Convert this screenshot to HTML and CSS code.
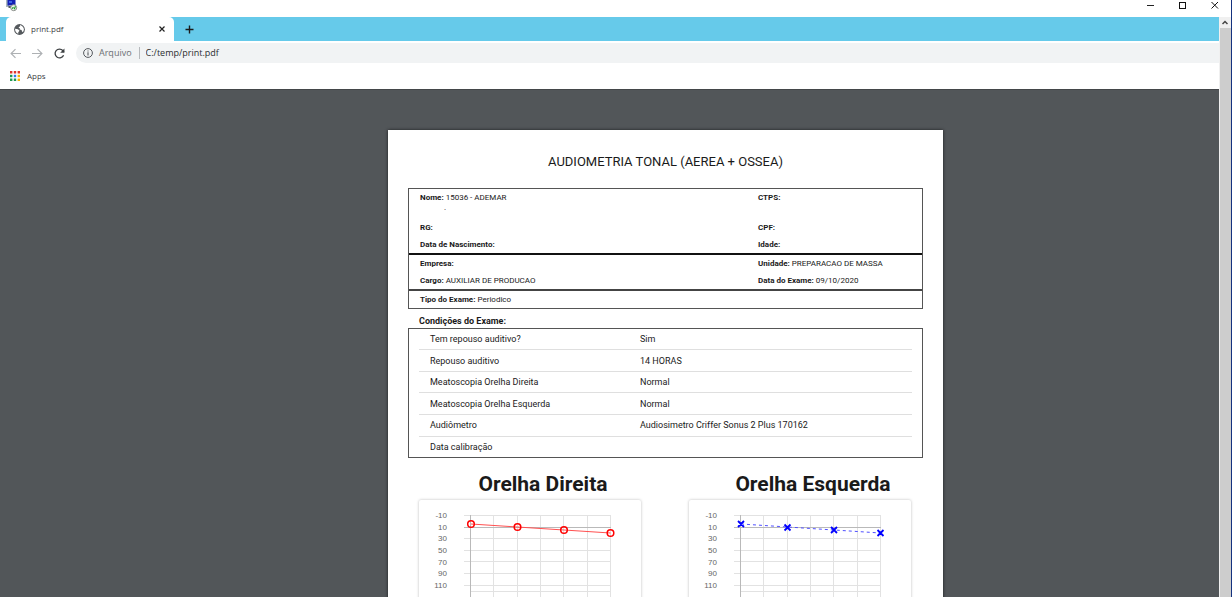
FILE: index.html
```html
<!DOCTYPE html>
<html lang="pt-BR">
<head>
<meta charset="utf-8">
<title>print.pdf</title>
<link rel="stylesheet" href="styles.css">
</head>
<body>
<div class="window">
  <header class="titlebar">
    <svg class="app-icon" viewBox="0 0 12 12" aria-hidden="true">
      <rect x="0" y="0" width="3" height="7" fill="#a9b6bd"/>
      <rect x="1.500" y="0" width="8" height="5.500" fill="#1420b4"/>
      <rect x="3" y="1" width="3" height="2" fill="#3c63e8"/>
      <rect x="2.500" y="6" width="4" height="2" fill="#555b60"/>
      <circle cx="7.700" cy="7.700" r="3" fill="#eef3ee" stroke="#8b8f8b"/>
      <path d="M6 8.600 7.500 7.200M9.500 6.300 8.200 9.300" stroke="#1d9a2b" stroke-width="1.200" fill="none"/>
    </svg>
    <div class="window-controls">
      <button type="button" aria-label="Minimizar"><svg viewBox="0 0 8 8"><path d="M0 4.500h7" stroke="#222"/></svg></button>
      <button type="button" aria-label="Maximizar"><svg viewBox="0 0 8 8"><rect x=".5" y="1.500" width="6" height="6" fill="none" stroke="#111"/></svg></button>
      <button type="button" aria-label="Fechar"><svg viewBox="0 0 8 8"><path d="M.5 1 7 7.500M7 1 .5 7.500" stroke="#111" fill="none"/></svg></button>
    </div>
  </header>
  <div class="client">
    <div class="browser">
      <nav class="tabstrip">
        <div class="tab">
          <svg class="globe" viewBox="0 0 10 10" aria-hidden="true">
            <circle cx="5" cy="5" r="4.900" fill="#55595d"/>
            <path d="M1 4.400 3.600 4.700 4.900 5.800 4.600 6.900 3.900 7.300V8.800C1.900 8.300.8 6.500 1 4.400ZM5.400 1 6.500 1.300C8 2 9 3.500 9 5 8.900 6 8.600 6.800 8 7.500L7.200 6.700 6.900 5.400 5.200 4.900 5.300 3.900 4.200 3.500 4.700 2.500 5.600 2.300Z" fill="#fff"/>
          </svg>
          <span class="tab-title">print.pdf</span>
          <button class="tab-close" type="button" aria-label="Fechar guia"><svg viewBox="0 0 6 6"><path d="M.5.5l5 5M5.500.5l-5 5" stroke="#222" stroke-width="1.200"/></svg></button>
        </div>
        <button class="new-tab" type="button" aria-label="Nova guia"><svg viewBox="0 0 9 9"><path d="M4.500 .5v8M.5 4.500h8" stroke="#1b1b1b" stroke-width="1.400"/></svg></button>
      </nav>
      <div class="toolbar">
        <button type="button" aria-label="Voltar"><svg viewBox="0 0 10 10"><path d="M10 5H1M5 1 1 5l4 4" stroke="#aeb1b4" stroke-width="1.100" fill="none"/></svg></button>
        <button type="button" aria-label="Avançar"><svg viewBox="0 0 10 10"><path d="M0 5h9M5 1l4 4-4 4" stroke="#aeb1b4" stroke-width="1.100" fill="none"/></svg></button>
        <button type="button" aria-label="Recarregar"><svg viewBox="0 0 10 10"><path d="M8.700 6.500A4 4 0 1 1 8 2.300L9 3.500" stroke="#3d4043" stroke-width="1.200" fill="none"/><path d="M9.500 .5v3.900H5.600Z" fill="#3d4043"/></svg></button>
        <div class="omnibox">
          <svg class="info" viewBox="0 0 10 10" aria-hidden="true"><circle cx="5" cy="5" r="4.400" fill="none" stroke="#55595d"/><path d="M5 4.300v3.200M5 2.400v1.200" stroke="#55595d" stroke-width="1.100"/></svg>
          <label class="scheme" for="url">Arquivo</label>
          <input class="url" id="url" type="text" value="C:/temp/print.pdf">
        </div>
      </div>
      <div class="bookmarks">
        <a class="apps" href="#">
          <svg viewBox="0 0 10 10" aria-hidden="true">
            <path d="M0 0h2.400v2.400H0zM3.800 0h2.400v2.400H3.800zM7.600 0H10v2.400H7.600z" fill="#e0352b"/>
            <path d="M0 3.800h2.400v2.400H0z" fill="#1d9a50"/><path d="M3.800 3.800h2.400v2.400H3.800z" fill="#3079ed"/><path d="M7.600 3.800H10v2.400H7.600z" fill="#f5b400"/>
            <path d="M0 7.600h2.400V10H0zM3.800 7.600h2.400V10H3.800z" fill="#1d9a50"/><path d="M7.600 7.600H10V10H7.600z" fill="#f5b400"/>
          </svg>
          <span>Apps</span>
        </a>
      </div>
      <main class="viewer">
        <article class="sheet">
          <h1>AUDIOMETRIA TONAL (AEREA + OSSEA)</h1>
          <section class="record">
            <div class="block personal">
              <p class="tall"><b>Nome:</b> 15036 - ADEMAR<br><span class="mark">.</span></p><p class="tall"><b>CTPS:</b></p>
              <p><b>RG:</b></p><p><b>CPF:</b></p>
              <p><b>Data de Nascimento:</b></p><p><b>Idade:</b></p>
            </div>
            <div class="block">
              <p><b>Empresa:</b></p><p><b>Unidade:</b> PREPARACAO DE MASSA</p>
              <p><b>Cargo:</b> AUXILIAR DE PRODUCAO</p><p><b>Data do Exame:</b> 09/10/2020</p>
            </div>
            <div class="block">
              <p><b>Tipo do Exame:</b> Periodico</p>
            </div>
          </section>
          <h2>Condições do Exame:</h2>
          <div class="conditions">
            <table>
              <tr><td>Tem repouso auditivo?</td><td>Sim</td></tr>
              <tr><td>Repouso auditivo</td><td>14 HORAS</td></tr>
              <tr><td>Meatoscopia Orelha Direita</td><td>Normal</td></tr>
              <tr><td>Meatoscopia Orelha Esquerda</td><td>Normal</td></tr>
              <tr><td>Audiômetro</td><td>Audiosimetro Criffer Sonus 2 Plus 170162</td></tr>
              <tr><td>Data calibração</td><td></td></tr>
            </table>
          </div>
          <div class="ears">
            <section class="ear">
              <h3>Orelha Direita</h3>
              <div class="card">
                <svg class="chart" viewBox="0 0 222 120" role="img" aria-label="Audiograma da orelha direita">
                  <g class="grid">
                    <path d="M45 15.500h147M45 38.500h147M45 50.500h147M45 61.500h147M45 73.500h147M45 85.500h147M51 91.500h141"/>
                    <path d="M74.500 15v105M98.500 15v105M121.500 15v105M144.500 15v105M168.500 15v105M191.500 15v105"/>
                  </g>
                  <path class="axis" d="M45 27.500h147M51.500 15v105"/>
                  <g class="scale">
                    <text x="28" y="18">-10</text><text x="28" y="30">10</text><text x="28" y="41">30</text><text x="28" y="53">50</text><text x="28" y="65">70</text><text x="28" y="76">90</text><text x="28" y="88">110</text>
                  </g>
                  <path class="right-line" d="M52 24 98.500 27 145 30 191.500 33"/>
                  <g class="right-points"><circle cx="52" cy="24" r="3.300"/><circle cx="98.500" cy="27" r="3.300"/><circle cx="145" cy="30" r="3.300"/><circle cx="191.500" cy="33" r="3.300"/></g>
                </svg>
              </div>
            </section>
            <section class="ear">
              <h3>Orelha Esquerda</h3>
              <div class="card">
                <svg class="chart" viewBox="0 0 222 120" role="img" aria-label="Audiograma da orelha esquerda">
                  <g class="grid">
                    <path d="M45 15.500h147M45 38.500h147M45 50.500h147M45 61.500h147M45 73.500h147M45 85.500h147M51 91.500h141"/>
                    <path d="M74.500 15v105M98.500 15v105M121.500 15v105M144.500 15v105M168.500 15v105M191.500 15v105"/>
                  </g>
                  <path class="axis" d="M45 27.500h147M51.500 15v105"/>
                  <g class="scale">
                    <text x="28" y="18">-10</text><text x="28" y="30">10</text><text x="28" y="41">30</text><text x="28" y="53">50</text><text x="28" y="65">70</text><text x="28" y="76">90</text><text x="28" y="88">110</text>
                  </g>
                  <path class="left-line" d="M52 24 98.500 27 145 30 191.500 33"/>
                  <path class="left-points" d="M49 21l6 6m0-6-6 6M95.500 24.500l6 6m0-6-6 6M142 27l6 6m0-6-6 6M188.500 30l6 6m0-6-6 6"/>
                </svg>
              </div>
            </section>
          </div>
        </article>
      </main>
    </div>
    <div class="scrollbar">
      <button type="button" aria-label="Rolar para cima"><svg viewBox="0 0 6 5"><path d="M.5 4 3 1.500 5.500 4" stroke="#444" stroke-width="1.500" fill="none"/></svg></button>
      <div class="thumb"></div>
    </div>
  </div>
</div>
</body>
</html>
```

FILE: styles.css
```css
* { box-sizing: border-box; }

body, h1, h2, h3, p { margin: 0; }

button {
  display: flex;
  align-items: center;
  justify-content: center;
  padding: 0;
  border: 0;
  background: none;
}

svg { display: block; }

.window {
  display: flex;
  flex-direction: column;
  height: 100vh;
  overflow: hidden;
  background: #fff;
  border-right: 1px solid #14327f;
  font-family: "Open Sans", "Noto Sans", sans-serif;
  color: #3c4043;
}

.titlebar {
  display: flex;
  flex: none;
  justify-content: space-between;
  height: 17px;
  padding: 0 12px 0 6px;
}

.app-icon { width: 12px; height: 12px; }

.window-controls { display: flex; gap: 24px; height: 10px; }
.window-controls svg { width: 8px; height: 8px; }

.client { display: flex; flex: 1; min-height: 0; }

.browser {
  display: flex;
  flex: 1;
  flex-direction: column;
  min-width: 0;
}

.tabstrip {
  display: flex;
  flex: none;
  height: 24px;
  padding-left: 6px;
  background: #66caea;
}

.tab {
  display: flex;
  align-items: center;
  width: 168px;
  padding: 0 9px 0 8px;
  background: #fff;
  border-radius: 5px 5px 0 0;
}

.globe { width: 11px; height: 11px; }
.tab-title { flex: 1; margin-left: 6px; font-size: 8px; line-height: 12px; }
.tab-close svg { width: 6px; height: 6px; }
.new-tab { width: 30px; }
.new-tab svg { width: 9px; height: 9px; }

.toolbar {
  display: flex;
  flex: none;
  align-items: center;
  gap: 11px;
  height: 24px;
  padding: 0 0 0 10px;
}

.toolbar button svg { width: 11px; height: 11px; }

.omnibox {
  display: flex;
  flex: 1;
  align-items: center;
  height: 20px;
  padding-left: 7px;
  background: #f1f3f4;
  border-radius: 10px 0 0 10px;
  font-size: 9px;
  line-height: 12px;
}

.info { width: 10px; height: 10px; margin-right: 6px; }

.scheme {
  padding-right: 7px;
  border-right: 1px solid #b5b8bb;
  color: #6b6f73;
}

.url {
  flex: 1;
  padding: 0 0 0 6px;
  border: 0;
  background: none;
  color: #2b2d30;
  font: inherit;
}

.bookmarks {
  display: flex;
  flex: none;
  align-items: center;
  height: 24px;
  padding: 0 10px 3px;
}

.apps {
  display: flex;
  align-items: center;
  gap: 7px;
  color: #3c4043;
  font-size: 8px;
  line-height: 12px;
  text-decoration: none;
}

.apps svg { width: 10px; height: 10px; }

.viewer {
  flex: 1;
  min-height: 0;
  padding: 40px 0 0 112px;
  overflow: hidden;
  background: #525659;
  border-top: 1px solid #434649;
}

.sheet {
  width: 555px;
  max-width: 100%;
  min-height: 785px;
  margin: 0 auto;
  padding: 23px 20px;
  background: #fff;
  box-shadow: 0 0 3px #1c1d1e;
  color: #1a1a1a;
  font-family: Roboto, sans-serif;
}

.sheet h1 {
  margin-bottom: 17px;
  font-size: 13px;
  font-weight: 400;
  line-height: 18px;
  text-align: center;
}

.record { border: 1px solid #555; font-size: 8px; }

.block {
  display: grid;
  grid-template-columns: 338px 1fr;
  padding-left: 11px;
}

.block + .block { border-top: 2px solid #444; }
.personal + .block { border-top-color: #111; }
.block p { line-height: 10px; padding: 4px 0 3px; }
.block .tall { height: 30px; }
.mark { margin-left: 24px; }

.sheet h2 {
  margin: 6px 0 1px 11px;
  font-size: 9px;
  font-weight: 700;
  line-height: 12px;
}

.conditions {
  padding: 0 10px;
  border: 1px solid #555;
}

.conditions table {
  width: 100%;
  height: 128px;
  border-collapse: collapse;
  font-size: 9px;
  line-height: 12px;
}

.conditions td { padding: 0 0 0 11px; }
.conditions td:first-child { width: 210px; }
.conditions tr + tr td { border-top: 1px solid #dfdfdf; }

.ears {
  display: grid;
  grid-template-columns: 1fr 1fr;
  gap: 48px;
  padding: 13px 12px 0 11px;
}

.ear h3 {
  margin-bottom: 3px;
  padding-left: 26px;
  font-size: 21px;
  font-weight: 700;
  line-height: 26px;
  text-align: center;
  white-space: nowrap;
}

.card {
  height: 280px;
  border-radius: 2px;
  box-shadow: 0 0 3px #bbb;
}

.chart { width: 100%; overflow: visible; }
.grid { fill: none; stroke: #e2e2e2; }
.axis { fill: none; stroke: #b9b9b9; }
.scale { fill: #666; font-family: "Liberation Sans", sans-serif; font-size: 8px; text-anchor: end; }
.right-line { fill: none; stroke: #ff5050; }
.right-points { fill: none; stroke: #f00; stroke-width: 1.500; }
.left-line { fill: none; stroke: #5050ff; stroke-dasharray: 3 3; }
.left-points { fill: none; stroke: #00f; stroke-width: 1.800; }

.scrollbar {
  display: flex;
  flex: none;
  flex-direction: column;
  width: 12px;
  background: #f0f0f0;
}

.scrollbar button { height: 11px; }
.scrollbar svg { width: 6px; height: 5px; }
.thumb { flex: 1; margin-left: 1px; background: #cdcdcd; }
```
